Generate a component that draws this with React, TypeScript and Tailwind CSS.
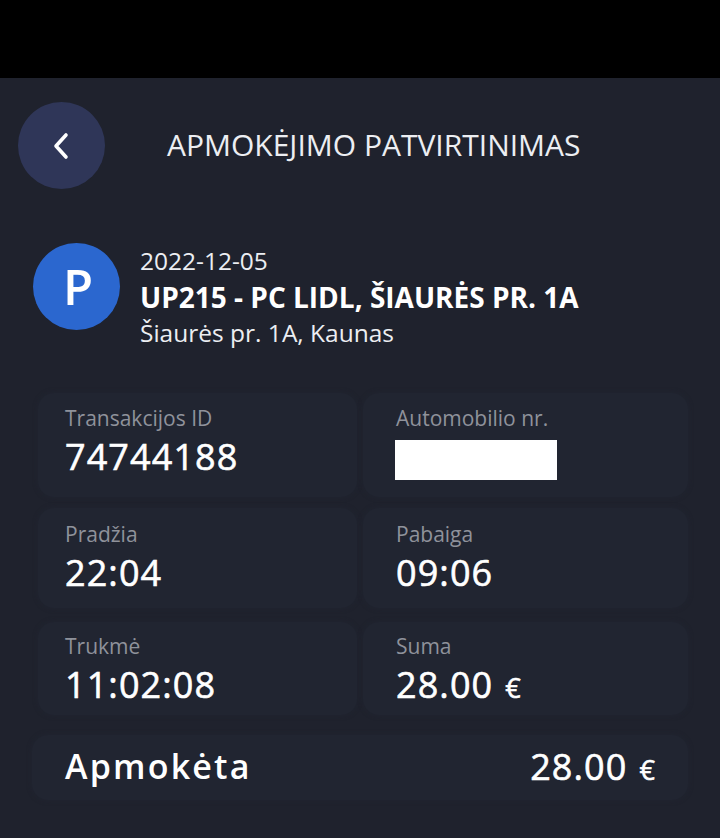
import React from "react";

function Card({ label, value, unit, className, children }: { label: string; value?: string; unit?: boolean; className: string; children?: React.ReactNode }) {
  return (
    <div className={`rounded-2xl bg-[#212531] shadow-[0_0_5px_#212531] ${className}`}>
      <div className="text-[21px] leading-[26px] text-[#8f929b]">{label}</div>
      {children ?? (
        <div className="mt-[5px] text-[36px] leading-[42px] font-normal tracking-[1.1px] text-white [-webkit-text-stroke:0.6px_white]">
          {value}
          {unit && <span className="ml-[12px] text-[27px]">€</span>}
        </div>
      )}
    </div>
  );
}

export default function App() {
  return (
    <div className="h-[838px] w-[720px] overflow-hidden bg-[#1f222d] font-['Open_Sans',sans-serif] text-white">
      <div className="h-[78px] bg-black" />
      <div className="mt-[24px] flex h-[87px] items-center pl-[18px]">
        <div className="flex h-[87px] w-[87px] items-center justify-center rounded-full bg-[#2f3658]">
          <svg width="20" height="28" viewBox="0 0 20 28" fill="none" stroke="white" strokeWidth="3.6" strokeLinecap="round" strokeLinejoin="round">
            <path d="M14 3 L4 14 L14 25" />
          </svg>
        </div>
        <div className="mb-[2px] ml-[62px] text-[30px] leading-[36px] whitespace-nowrap text-[#eceef2]">APMOKĖJIMO PATVIRTINIMAS</div>
      </div>
      <div className="mt-[54px] flex items-start pl-[33px]">
        <div className="flex h-[87px] w-[87px] items-center justify-center rounded-full bg-[#2b67cf] pl-[3px] text-[49px] leading-none font-semibold">P</div>
        <div className="ml-[20px] whitespace-nowrap leading-[36px]">
          <div className="text-[24.5px] text-[#eceef2]">2022-12-05</div>
          <div className="text-[28px] font-bold">UP215 - PC LIDL, ŠIAURĖS PR. 1A</div>
          <div className="text-[24.5px] text-[#eceef2]">Šiaurės pr. 1A, Kaunas</div>
        </div>
      </div>
      <div className="mt-[42px] grid grid-cols-[319px_325px] gap-x-[6px] pl-[38px]">
        <Card className="h-[104px] pt-[12px] pl-[27px]" label="Transakcijos ID" value="74744188" />
        <Card className="h-[104px] pt-[12px] pl-[33px]" label="Automobilio nr.">
          <div className="mt-[9px] ml-[-1px] h-[40px] w-[162px] bg-white" />
        </Card>
        <Card className="mt-[11px] h-[100px] pt-[13px] pl-[27px]" label="Pradžia" value="22:04" />
        <Card className="mt-[11px] h-[100px] pt-[13px] pl-[33px]" label="Pabaiga" value="09:06" />
        <Card className="mt-[14px] h-[93px] pt-[11px] pl-[27px]" label="Trukmė" value="11:02:08" />
        <Card className="mt-[14px] h-[93px] pt-[11px] pl-[33px]" label="Suma" value="28.00" unit />
      </div>
      <div className="mt-[20px] ml-[32px] flex h-[65px] w-[656px] items-center justify-between rounded-2xl bg-[#212531] pr-[32px] pb-[2px] pl-[33px] shadow-[0_0_5px_#212531]">
        <div className="text-[34px] font-semibold tracking-[2.2px]">Apmokėta</div>
        <div className="text-[36px] font-normal tracking-[1.1px] [-webkit-text-stroke:0.6px_white]">
          28.00<span className="ml-[12px] text-[27px]">€</span>
        </div>
      </div>
    </div>
  );
}
